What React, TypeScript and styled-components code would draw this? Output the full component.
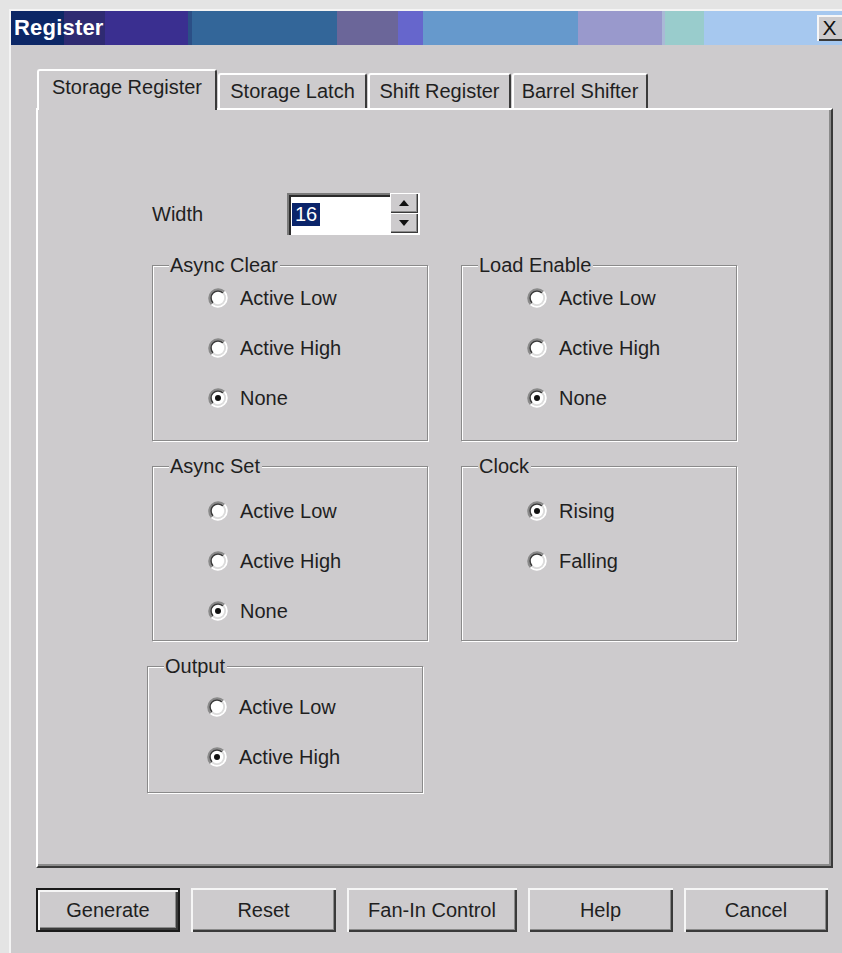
import styled, { createGlobalStyle } from "styled-components";

const GlobalStyle = createGlobalStyle`
  html, body {
    margin: 0;
    padding: 0;
    overflow: hidden;
    background: #dadada;
  }
  body {
    font-family: "Liberation Sans", Arial, sans-serif;
    color: #1f1f1f;
  }
`;

const FACE = "#cdcbcd";

type Group = {
  title: string;
  options: string[];
  checked: number;
  height: number;
  top: number;
  indent: number;
  shift?: number;
};

const groups: Group[] = [
  { title: "Async Clear", options: ["Active Low", "Active High", "None"], checked: 2, height: 187, top: 7, indent: 55 },
  { title: "Load Enable", options: ["Active Low", "Active High", "None"], checked: 2, height: 187, top: 7, indent: 65 },
  { title: "Async Set", options: ["Active Low", "Active High", "None"], checked: 2, height: 186, top: 19, indent: 55 },
  { title: "Clock", options: ["Rising", "Falling"], checked: 0, height: 186, top: 19, indent: 65 },
  { title: "Output", options: ["Active Low", "Active High"], checked: 1, height: 138, top: 15, indent: 59, shift: -5 },
];

const tabs = [
  { label: "Storage Register", width: 180 },
  { label: "Storage Latch", width: 149 },
  { label: "Shift Register", width: 143 },
  { label: "Barrel Shifter", width: 136 },
];

const buttons = [
  { label: "Generate", width: 144, isDefault: true },
  { label: "Reset", width: 145 },
  { label: "Fan-In Control", width: 170 },
  { label: "Help", width: 145 },
  { label: "Cancel", width: 144 },
];

const Radio = ({ on }: { on: boolean }) => (
  <svg width="20" height="20" viewBox="0 0 20 20">
    <circle cx="10" cy="10" r="7" fill="#fff" />
    <path d="M3.64 16.36 A9 9 0 0 1 16.36 3.64" fill="none" stroke="#8a8a8a" strokeWidth="2" />
    <path d="M16.36 3.64 A9 9 0 0 1 3.64 16.36" fill="none" stroke="#fff" strokeWidth="2" />
    <path d="M5.05 14.95 A7 7 0 0 1 14.95 5.05" fill="none" stroke="#3a3a3a" strokeWidth="1.6" />
    <path d="M14.95 5.05 A7 7 0 0 1 5.05 14.95" fill="none" stroke="#dcdcdc" strokeWidth="1.6" />
    {on && <circle cx="10" cy="10" r="3" fill="#111" />}
  </svg>
);

const Arrow = ({ up }: { up?: boolean }) => (
  <svg width="10" height="6" viewBox="0 0 10 6">
    <polygon points={up ? "5,0 10,6 0,6" : "0,0 10,0 5,6"} fill="#111" />
  </svg>
);

export default function App() {
  return (
    <S.Screen>
      <GlobalStyle />
      <S.Frame>
        <S.TitleBar>
          <S.Title>Register</S.Title>
          <S.Close>X</S.Close>
        </S.TitleBar>
        <S.Body>
          <S.TabStrip>
            {tabs.map((t, i) => (
              <S.Tab key={t.label} $active={i === 0} $w={t.width}>
                {t.label}
              </S.Tab>
            ))}
          </S.TabStrip>
          <S.Panel>
            <S.WidthRow>
              <S.FieldLabel>Width</S.FieldLabel>
              <S.Spinner>
                <S.Input>
                  <S.Selected>16</S.Selected>
                </S.Input>
                <S.SpinButtons>
                  <S.SpinButton>
                    <Arrow up />
                  </S.SpinButton>
                  <S.SpinButton>
                    <Arrow />
                  </S.SpinButton>
                </S.SpinButtons>
              </S.Spinner>
            </S.WidthRow>
            <S.Groups>
              {groups.map((g) => (
                <S.GroupBox key={g.title} $h={g.height} $shift={g.shift ?? 0}>
                  <S.Legend>{g.title}</S.Legend>
                  <S.RadioList $top={g.top} $indent={g.indent}>
                    {g.options.map((o, i) => (
                      <S.RadioRow key={o}>
                        <Radio on={i === g.checked} />
                        {o}
                      </S.RadioRow>
                    ))}
                  </S.RadioList>
                </S.GroupBox>
              ))}
            </S.Groups>
          </S.Panel>
          <S.ButtonRow>
            {buttons.map((b) => (
              <S.Button key={b.label} $w={b.width} $default={!!b.isDefault}>
                {b.label}
              </S.Button>
            ))}
          </S.ButtonRow>
        </S.Body>
      </S.Frame>
    </S.Screen>
  );
}

const raised = `
  box-shadow: inset 2px 2px 0 #f6f6f6, inset -2px -2px 0 #3a3a3a,
    inset -3px -3px 0 #8a8a8a;
`;

const S = {
  Screen: styled.div`
    width: 842px;
    height: 953px;
    box-sizing: border-box;
    padding: 9px 0 0 9px;
    overflow: hidden;
    background: #e4e4e4;
  `,
  Frame: styled.div`
    height: 100%;
    background: ${FACE};
    border-top: 2px solid #f4f4f4;
    border-left: 2px solid #f4f4f4;
  `,
  TitleBar: styled.div`
    height: 34px;
    display: flex;
    align-items: center;
    padding-left: 3px;
    background: linear-gradient(
      to right,
      #0c2766 0 53px,
      #2f2b72 53px 94px,
      #3a2f90 94px 177px,
      #2b4f86 177px 181px,
      #336699 181px 326px,
      #6b6699 326px 387px,
      #6666cc 387px 412px,
      #6699cc 412px 567px,
      #9999cc 567px 651px,
      #a9b9d6 651px 654px,
      #99cccc 654px 693px,
      #a6c8ef 693px
    );
  `,
  Title: styled.span`
    color: #fff;
    font-weight: bold;
    font-size: 22px;
    letter-spacing: 0.2px;
  `,
  Close: styled.div`
    margin-left: auto;
    width: 25px;
    height: 26px;
    display: flex;
    align-items: center;
    justify-content: center;
    background: ${FACE};
    font-size: 21px;
    color: #111;
    box-shadow: inset 2px 2px 0 #f6f6f6, inset 0 -2px 0 #3a3a3a;
  `,
  Body: styled.div`
    padding: 24px 0 0 25px;
    width: 797px;
  `,
  TabStrip: styled.div`
    position: relative;
    z-index: 1;
    display: flex;
    align-items: flex-end;
    height: 41px;
    margin-bottom: -2px;
  `,
  Tab: styled.div<{ $active: boolean; $w: number }>`
    box-sizing: border-box;
    width: ${(p) => p.$w}px;
    height: ${(p) => (p.$active ? 41 : 35)}px;
    margin: ${(p) => (p.$active ? "0 1px 0 1px" : "0 1px 2px 0")};
    padding-bottom: ${(p) => (p.$active ? 6 : 0)}px;
    display: flex;
    align-items: center;
    justify-content: center;
    font-size: 20px;
    background: ${FACE};
    border-top: 2px solid #fff;
    border-left: 2px solid #fff;
    border-right: 2px solid #3a3a3a;
    border-radius: 3px 3px 0 0;
    white-space: nowrap;
  `,
  Panel: styled.div`
    box-sizing: border-box;
    width: 797px;
    height: 760px;
    padding: 83px 0 0 114px;
    border-top: 2px solid #fff;
    border-left: 2px solid #fff;
    border-right: 2px solid #3a3a3a;
    border-bottom: 2px solid #3a3a3a;
    box-shadow: inset -2px -2px 0 #8a8a8a;
  `,
  WidthRow: styled.div`
    display: flex;
    align-items: center;
    height: 42px;
  `,
  FieldLabel: styled.span`
    width: 135px;
    font-size: 20px;
  `,
  Spinner: styled.div`
    display: flex;
  `,
  Input: styled.div`
    box-sizing: border-box;
    width: 103px;
    height: 42px;
    background: #fff;
    display: flex;
    align-items: center;
    padding-left: 5px;
    box-shadow: inset 2px 2px 0 #7a7a7a, inset 4px 4px 0 #2a2a2a;
  `,
  Selected: styled.span`
    background: #0a246a;
    color: #fff;
    font-size: 20px;
    line-height: 23px;
    padding: 0 3px;
  `,
  SpinButtons: styled.div`
    display: flex;
    flex-direction: column;
    box-shadow: inset 0 -2px 0 #fff, inset -2px 0 0 #fff;
    padding: 0 2px 2px 0;
  `,
  SpinButton: styled.div`
    width: 28px;
    height: 20px;
    display: flex;
    align-items: center;
    justify-content: center;
    background: ${FACE};
    box-shadow: inset 1px 1px 0 #fff, inset -1px -1px 0 #3a3a3a,
      inset -2px -2px 0 #8a8a8a;
  `,
  Groups: styled.div`
    margin-top: 19px;
    display: grid;
    grid-template-columns: 276px 276px;
    column-gap: 33px;
    row-gap: 14px;
    align-items: start;
  `,
  GroupBox: styled.fieldset<{ $h: number; $shift: number }>`
    box-sizing: border-box;
    width: 276px;
    height: ${(p) => p.$h}px;
    margin: 0 0 0 ${(p) => p.$shift}px;
    padding: 0;
    min-width: 0;
    border: 1px solid #8a8a8a;
    box-shadow: 1px 1px 0 #fff, inset 1px 1px 0 #fff;
  `,
  Legend: styled.legend`
    margin-left: 16px;
    padding: 0 2px 0 1px;
    font-size: 20px;
    line-height: 22px;
    background: ${FACE};
  `,
  RadioList: styled.div<{ $top: number; $indent: number }>`
    display: flex;
    flex-direction: column;
    gap: 20px;
    padding-top: ${(p) => p.$top}px;
    margin-left: ${(p) => p.$indent}px;
  `,
  RadioRow: styled.div`
    display: flex;
    align-items: center;
    gap: 12px;
    height: 30px;
    font-size: 20px;
  `,
  ButtonRow: styled.div`
    display: flex;
    gap: 11px;
    margin-top: 20px;
  `,
  Button: styled.div<{ $w: number; $default: boolean }>`
    box-sizing: border-box;
    width: ${(p) => p.$w}px;
    height: 44px;
    display: flex;
    align-items: center;
    justify-content: center;
    font-size: 20px;
    background: ${FACE};
    border: ${(p) => (p.$default ? "2px solid #1a1a1a" : "none")};
    ${raised}
  `,
};
